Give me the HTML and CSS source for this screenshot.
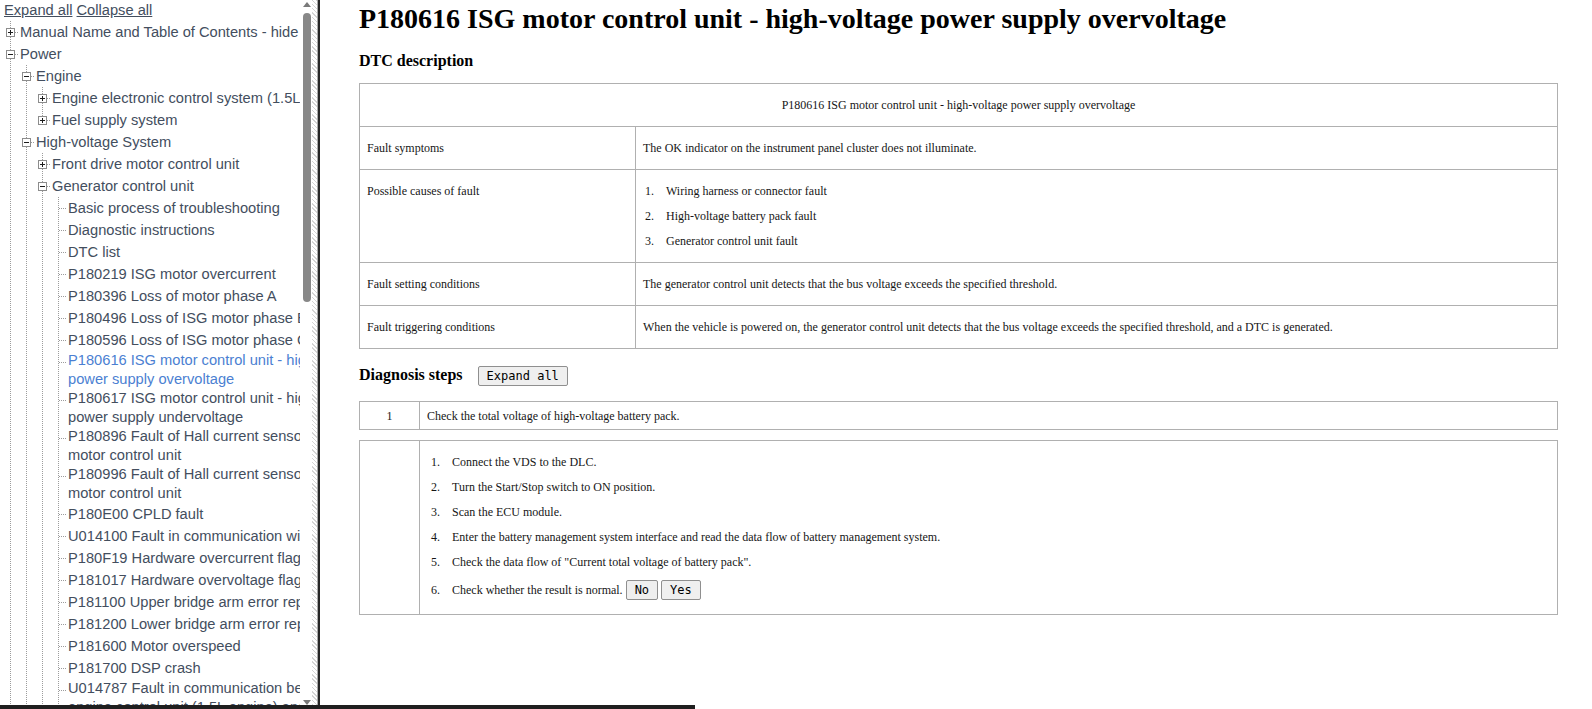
FILE: index.html
```
<!DOCTYPE html>
<html lang="en">
<head>
    <meta charset="UTF-8">
    <meta name="viewport" content="width=device-width, initial-scale=1.0">
    <title>P180616 ISG motor control unit - high-voltage power supply overvoltage</title>
    <link rel="stylesheet" href="styles.css">
</head>
<body>
    <div class="layout">
        <aside class="toc">
            <div class="toc-view">
                <div class="toc-links"><a href="#">Expand all</a> <a href="#">Collapse all</a></div>
                <ul class="tree">
                    <li><div class="node"><span class="tw"><i class="box plus"></i></span><span class="lbl">Manual Name and Table of Contents - hide</span></div></li>
                    <li><div class="node"><span class="tw"><i class="box"></i></span><span class="lbl">Power</span></div>
                        <ul>
                            <li><div class="node"><span class="tw"><i class="box"></i></span><span class="lbl">Engine</span></div>
                                <ul>
                                    <li><div class="node"><span class="tw"><i class="box plus"></i></span><span class="lbl">Engine electronic control system (1.5L engine)</span></div></li>
                                    <li><div class="node"><span class="tw"><i class="box plus"></i></span><span class="lbl">Fuel supply system</span></div></li>
                                </ul>
                            </li>
                            <li><div class="node"><span class="tw"><i class="box"></i></span><span class="lbl">High-voltage System</span></div>
                                <ul>
                                    <li><div class="node"><span class="tw"><i class="box plus"></i></span><span class="lbl">Front drive motor control unit</span></div></li>
                                    <li><div class="node"><span class="tw"><i class="box"></i></span><span class="lbl">Generator control unit</span></div>
                                        <ul>
                                            <li><div class="node"><span class="tw"></span><span class="lbl">Basic process of troubleshooting</span></div></li>
                                            <li><div class="node"><span class="tw"></span><span class="lbl">Diagnostic instructions</span></div></li>
                                            <li><div class="node"><span class="tw"></span><span class="lbl">DTC list</span></div></li>
                                            <li><div class="node"><span class="tw"></span><span class="lbl">P180219 ISG motor overcurrent</span></div></li>
                                            <li><div class="node"><span class="tw"></span><span class="lbl">P180396 Loss of motor phase A</span></div></li>
                                            <li><div class="node"><span class="tw"></span><span class="lbl">P180496 Loss of ISG motor phase B</span></div></li>
                                            <li><div class="node"><span class="tw"></span><span class="lbl">P180596 Loss of ISG motor phase C</span></div></li>
                                            <li><div class="node"><span class="tw"></span><span class="lbl current">P180616 ISG motor control unit - high-voltage power supply overvoltage</span></div></li>
                                            <li><div class="node"><span class="tw"></span><span class="lbl">P180617 ISG motor control unit - high-voltage power supply undervoltage</span></div></li>
                                            <li><div class="node"><span class="tw"></span><span class="lbl">P180896 Fault of Hall current sensor of ISG motor control unit</span></div></li>
                                            <li><div class="node"><span class="tw"></span><span class="lbl">P180996 Fault of Hall current sensor of ISG motor control unit</span></div></li>
                                            <li><div class="node"><span class="tw"></span><span class="lbl">P180E00 CPLD fault</span></div></li>
                                            <li><div class="node"><span class="tw"></span><span class="lbl">U014100 Fault in communication with VCU</span></div></li>
                                            <li><div class="node"><span class="tw"></span><span class="lbl">P180F19 Hardware overcurrent flag fault</span></div></li>
                                            <li><div class="node"><span class="tw"></span><span class="lbl">P181017 Hardware overvoltage flag fault</span></div></li>
                                            <li><div class="node"><span class="tw"></span><span class="lbl">P181100 Upper bridge arm error report</span></div></li>
                                            <li><div class="node"><span class="tw"></span><span class="lbl">P181200 Lower bridge arm error report</span></div></li>
                                            <li><div class="node"><span class="tw"></span><span class="lbl">P181600 Motor overspeed</span></div></li>
                                            <li><div class="node"><span class="tw"></span><span class="lbl">P181700 DSP crash</span></div></li>
                                            <li><div class="node"><span class="tw"></span><span class="lbl">U014787 Fault in communication between engine control unit (1.5L engine) and ISG</span></div></li>
                                            <li><div class="node"><span class="tw"></span><span class="lbl">P181900 Motor overtemperature</span></div></li>
                                        </ul>
                                    </li>
                                    <li><div class="node"><span class="tw"><i class="box plus"></i></span><span class="lbl">High-voltage battery pack</span></div></li>
                                </ul>
                            </li>
                            <li><div class="node"><span class="tw"><i class="box plus"></i></span><span class="lbl">Transmission</span></div></li>
                        </ul>
                    </li>
                    <li><div class="node"><span class="tw"><i class="box plus"></i></span><span class="lbl">Chassis</span></div></li>
                </ul>
            </div>
            <div class="scrollbar">
                <span class="arrow up"></span>
                <span class="thumb"></span>
                <span class="arrow down"></span>
            </div>
        </aside>

        <div class="splitter"></div>

        <main class="content">
            <h1 class="title">P180616 ISG motor control unit - high-voltage power supply overvoltage</h1>

            <h3 class="sub">DTC description</h3>
            <table class="dtc">
                <colgroup>
                    <col class="key-col">
                    <col>
                </colgroup>
                <tr>
                    <td class="head" colspan="2">P180616 ISG motor control unit - high-voltage power supply overvoltage</td>
                </tr>
                <tr>
                    <td>Fault symptoms</td>
                    <td>The OK indicator on the instrument panel cluster does not illuminate.</td>
                </tr>
                <tr>
                    <td>Possible causes of fault</td>
                    <td>
                        <ol class="items">
                            <li>Wiring harness or connector fault</li>
                            <li>High-voltage battery pack fault</li>
                            <li>Generator control unit fault</li>
                        </ol>
                    </td>
                </tr>
                <tr>
                    <td>Fault setting conditions</td>
                    <td>The generator control unit detects that the bus voltage exceeds the specified threshold.</td>
                </tr>
                <tr>
                    <td>Fault triggering conditions</td>
                    <td>When the vehicle is powered on, the generator control unit detects that the bus voltage exceeds the specified threshold, and a DTC is generated.</td>
                </tr>
            </table>

            <div class="steps-head">
                <h3>Diagnosis steps</h3>
                <button class="btn">Expand all</button>
            </div>

            <table class="step">
                <tr>
                    <td class="no">1</td>
                    <td>Check the total voltage of high-voltage battery pack.</td>
                </tr>
            </table>

            <table class="step">
                <tr>
                    <td class="no"></td>
                    <td class="body">
                        <ol class="items">
                            <li>Connect the VDS to the DLC.</li>
                            <li>Turn the Start/Stop switch to ON position.</li>
                            <li>Scan the ECU module.</li>
                            <li>Enter the battery management system interface and read the data flow of battery management system.</li>
                            <li>Check the data flow of "Current total voltage of battery pack".</li>
                            <li>Check whether the result is normal. <button class="btn">No</button> <button class="btn">Yes</button></li>
                        </ol>
                    </td>
                </tr>
            </table>
        </main>
    </div>

    <div class="hbar"></div>
</body>
</html>
```

FILE: styles.css
```
* {
    box-sizing: border-box;
}

html, body {
    margin: 0;
    padding: 0;
    height: 100%;
    background: #fff;
    overflow: hidden;
}

.layout {
    display: flex;
    height: 100%;
}

/* left pane: table of contents */

.toc {
    display: flex;
    flex: none;
    width: 312px;
    height: 100%;
}

.toc-view {
    width: 300px;
    overflow: hidden;
    padding-left: 2px;
    font-family: "Liberation Sans", Arial, sans-serif;
    font-size: 11pt;
    color: #434e5e;
}

.toc-links {
    padding: 2px 0 2px 2px;
    line-height: 17px;
    white-space: nowrap;
}

.toc-links a {
    color: #434e5e;
    text-decoration: underline;
}

.tree,
.tree ul {
    list-style: none;
    margin: 0;
    padding: 0;
}

.tree {
    width: 376px;
}

.tree ul {
    margin-left: 16px;
}

.tree li {
    background: repeating-linear-gradient(to bottom, #9c9c9c 0 1px, transparent 1px 2px) 8px 0 / 1px 100% no-repeat;
}

.tree li:last-child {
    background-size: 1px 12px;
}

.node {
    display: flex;
    align-items: center;
    min-height: 22px;
    line-height: 19px;
}

.tw {
    flex: none;
    align-self: flex-start;
    width: 18px;
    height: 19px;
    margin-top: 2px;
    display: flex;
    align-items: center;
    padding-left: 4px;
    background: repeating-linear-gradient(to right, #9c9c9c 0 1px, transparent 1px 2px) 9px 9px / 8px 1px no-repeat;
}

.box {
    width: 9px;
    height: 9px;
    border: 1px solid #8c8c8c;
    background: linear-gradient(#1c1c1c, #1c1c1c) center / 5px 1px no-repeat, #fff;
}

.box.plus {
    background:
        linear-gradient(#1c1c1c, #1c1c1c) center / 5px 1px no-repeat,
        linear-gradient(#1c1c1c, #1c1c1c) center / 1px 5px no-repeat,
        #fff;
}

.lbl {
    flex: 1;
    min-width: 0;
}

.lbl.current {
    color: #4b7fd2;
}

.scrollbar {
    flex: none;
    width: 12px;
    display: flex;
    flex-direction: column;
    align-items: center;
    padding: 2px 0 4px 2px;
}

.arrow {
    width: 0;
    height: 0;
    border-left: 4px solid transparent;
    border-right: 4px solid transparent;
}

.arrow.up {
    border-bottom: 5px solid #7a7a7a;
}

.arrow.down {
    margin-top: auto;
    border-top: 5px solid #7a7a7a;
}

.thumb {
    width: 8px;
    height: 289px;
    margin-top: 6px;
    border-radius: 4px;
    background: #888;
}

.splitter {
    flex: none;
    width: 8px;
    background: repeating-linear-gradient(45deg, #d4d4d4 0 1px, #fff 1px 3px);
    box-shadow: inset -2px 0 #262626, inset -3px 0 #a8a8a8;
}

/* right pane: document */

.content {
    flex: 1;
    min-width: 0;
    padding: 0 34px 0 39px;
    font-family: "Liberation Serif", "Times New Roman", serif;
    color: #161616;
    overflow: hidden;
}

.title {
    font-size: 28px;
    line-height: 32px;
    margin: 3px 0 0;
    color: #000;
}

.sub {
    font-size: 16px;
    line-height: 18px;
    margin: 17px 0 13px;
    color: #000;
}

.dtc,
.step {
    width: 100%;
    border-collapse: collapse;
    font-size: 12px;
    line-height: 14px;
}

.dtc {
    table-layout: fixed;
}

.dtc .key-col {
    width: 276px;
}

.dtc td {
    border: 1px solid #b0b0b0;
    padding: 14px 7px;
    vertical-align: top;
}

.dtc td.head {
    text-align: center;
}

.items {
    list-style: none;
    margin: 0;
    padding: 0 0 0 2px;
    counter-reset: item;
}

.items li {
    counter-increment: item;
}

.items li + li {
    margin-top: 11px;
}

.items li::before {
    content: counter(item) ".";
    display: inline-block;
    width: 21px;
}

.steps-head {
    display: flex;
    align-items: baseline;
    margin: 17px 0 15px;
}

.steps-head h3 {
    margin: 0;
    font-size: 16px;
    line-height: 18px;
    color: #000;
}

.steps-head .btn {
    margin-left: 15px;
}

.btn {
    font-family: "DejaVu Sans Mono", monospace;
    font-size: 12px;
    line-height: 14px;
    padding: 2px 8px;
    border: 1px solid #8f8f8f;
    border-radius: 2px;
    background: #efefef;
    color: #000;
    cursor: pointer;
}

.step {
    margin-bottom: 10px;
}

.step td {
    border: 1px solid #b0b0b0;
    padding: 7px 7px 6px;
    vertical-align: top;
}

.step td.no {
    width: 60px;
    text-align: center;
}

.step td.body {
    padding: 14px 7px;
}

.step .items {
    padding-left: 4px;
}

.hbar {
    position: fixed;
    left: 0;
    bottom: 0;
    width: 695px;
    height: 4px;
    background: #1f1f1f;
}
```
